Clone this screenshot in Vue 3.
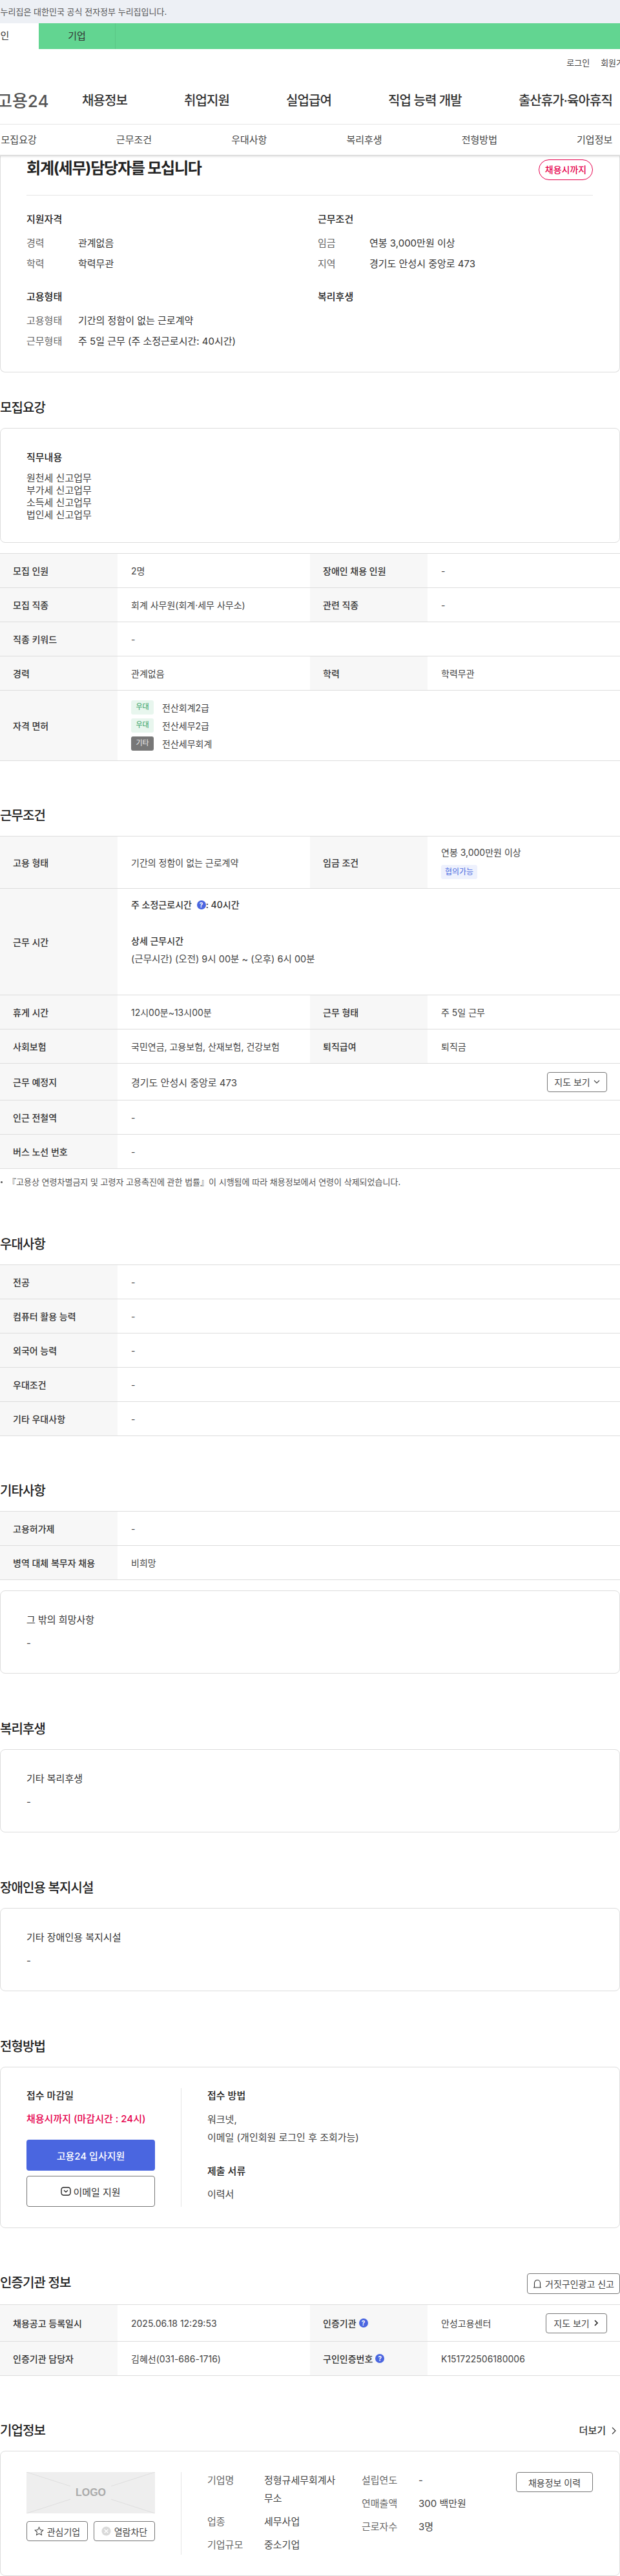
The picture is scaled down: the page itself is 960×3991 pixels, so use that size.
<script setup>
const subnav = ['모집요강', '근무조건', '우대사항', '복리후생', '전형방법', '기업정보']
const mainnav = ['채용정보', '취업지원', '실업급여', '직업 능력 개발', '출산휴가·육아휴직']
const recruit = [
  ['모집 인원', '2명', '장애인 채용 인원', '-'],
  ['모집 직종', '회계 사무원(회계·세무 사무소)', '관련 직종', '-'],
  ['직종 키워드', '-'],
  ['경력', '관계없음', '학력', '학력무관'],
]
const licences = [
  ['우대', '전산회계2급', 'green'],
  ['우대', '전산세무2급', 'green'],
  ['기타', '전산세무회계', 'gray'],
]
const prefer = [['전공', '-'], ['컴퓨터 활용 능력', '-'], ['외국어 능력', '-'], ['우대조건', '-'], ['기타 우대사항', '-']]
const etc = [['고용허가제', '-'], ['병역 대체 복무자 채용', '비희망']]
const condTail = [['인근 전철역', '-'], ['버스 노선 번호', '-']]
</script>

<template>
  <div class="page">
    <div class="gov">이 누리집은 대한민국 공식 전자정부 누리집입니다.</div>
    <div class="tabs">
      <div class="tab on">개인</div>
      <div class="tab">기업</div>
    </div>
    <div class="util"><span>로그인</span><span>회원가입</span></div>
    <header class="gnb">
      <div class="logo">고용24</div>
      <a v-for="m in mainnav" :key="m">{{ m }}</a>
    </header>
    <nav class="snb">
      <a v-for="s in subnav" :key="s">{{ s }}</a>
    </nav>

    <section class="card summary">
      <div class="sum-head">
        <h2>회계(세무)담당자를 모십니다</h2>
        <span class="pill">채용시까지</span>
      </div>
      <div class="sum-grid">
        <div class="block">
          <h4>지원자격</h4>
          <dl><dt>경력</dt><dd>관계없음</dd></dl>
          <dl><dt>학력</dt><dd>학력무관</dd></dl>
        </div>
        <div class="block">
          <h4>근무조건</h4>
          <dl><dt>임금</dt><dd>연봉 3,000만원 이상</dd></dl>
          <dl><dt>지역</dt><dd>경기도 안성시 중앙로 473</dd></dl>
        </div>
        <div class="block">
          <h4>고용형태</h4>
          <dl><dt>고용형태</dt><dd>기간의 정함이 없는 근로계약</dd></dl>
          <dl><dt>근무형태</dt><dd>주 5일 근무 (주 소정근로시간: 40시간)</dd></dl>
        </div>
        <div class="block">
          <h4>복리후생</h4>
        </div>
      </div>
    </section>

    <section class="sec first">
      <h3>모집요강</h3>
      <div class="card box job">
        <h4>직무내용</h4>
        <p>원천세 신고업무<br />부가세 신고업무<br />소득세 신고업무<br />법인세 신고업무</p>
      </div>
      <div class="table after-card">
        <div v-for="r in recruit" :key="r[0]" class="row">
          <div class="th">{{ r[0] }}</div>
          <div class="td" :class="{ wide: r.length === 2 }">{{ r[1] }}</div>
          <template v-if="r.length > 2">
            <div class="th">{{ r[2] }}</div>
            <div class="td">{{ r[3] }}</div>
          </template>
        </div>
        <div class="row lic">
          <div class="th">자격 면허</div>
          <div class="td wide lic-list">
            <div v-for="l in licences" :key="l[1]" class="lic-item">
              <span class="tag" :class="l[2]">{{ l[0] }}</span>{{ l[1] }}
            </div>
          </div>
        </div>
      </div>
    </section>

    <section class="sec">
      <h3>근무조건</h3>
      <div class="table">
        <div class="row r81">
          <div class="th">고용 형태</div>
          <div class="td">기간의 정함이 없는 근로계약</div>
          <div class="th">임금 조건</div>
          <div class="td stack">
            <span>연봉 3,000만원 이상</span>
            <span class="nego">협의가능</span>
          </div>
        </div>
        <div class="row r165">
          <div class="th">근무 시간</div>
          <div class="td wide hours">
            <p class="b">주 소정근로시간 <i class="q">?</i>: 40시간</p>
            <p class="b second">상세 근무시간</p>
            <p class="detail">(근무시간) (오전) 9시 00분 ~ (오후) 6시 00분</p>
          </div>
        </div>
        <div class="row">
          <div class="th">휴게 시간</div>
          <div class="td">12시00분~13시00분</div>
          <div class="th">근무 형태</div>
          <div class="td">주 5일 근무</div>
        </div>
        <div class="row">
          <div class="th">사회보험</div>
          <div class="td">국민연금, 고용보험, 산재보험, 건강보험</div>
          <div class="th">퇴직급여</div>
          <div class="td">퇴직금</div>
        </div>
        <div class="row r57">
          <div class="th">근무 예정지</div>
          <div class="td wide split">
            <span class="addr">경기도 안성시 중앙로 473</span>
            <button class="btn map">지도 보기
              <svg width="10" height="10" viewBox="0 0 10 10"><path d="M1 3l4 4 4-4" fill="none" stroke="#444" stroke-width="1.2" /></svg>
            </button>
          </div>
        </div>
        <div v-for="r in condTail" :key="r[0]" class="row">
          <div class="th">{{ r[0] }}</div>
          <div class="td wide">{{ r[1] }}</div>
        </div>
      </div>
      <p class="note">『고용상 연령차별금지 및 고령자 고용촉진에 관한 법률』이 시행됨에 따라 채용정보에서 연령이 삭제되었습니다.</p>
    </section>

    <section class="sec after-note">
      <h3>우대사항</h3>
      <div class="table">
        <div v-for="r in prefer" :key="r[0]" class="row">
          <div class="th">{{ r[0] }}</div>
          <div class="td wide">{{ r[1] }}</div>
        </div>
      </div>
    </section>

    <section class="sec">
      <h3>기타사항</h3>
      <div class="table">
        <div v-for="r in etc" :key="r[0]" class="row">
          <div class="th">{{ r[0] }}</div>
          <div class="td wide">{{ r[1] }}</div>
        </div>
      </div>
      <div class="card box plain after-card">
        <h5>그 밖의 희망사항</h5>
        <p>-</p>
      </div>
    </section>

    <section class="sec m71">
      <h3>복리후생</h3>
      <div class="card box plain">
        <h5>기타 복리후생</h5>
        <p>-</p>
      </div>
    </section>

    <section class="sec m71">
      <h3>장애인용 복지시설</h3>
      <div class="card box plain">
        <h5>기타 장애인용 복지시설</h5>
        <p>-</p>
      </div>
    </section>

    <section class="sec m71">
      <h3>전형방법</h3>
      <div class="card apply">
        <div class="apply-left">
          <h4>접수 마감일</h4>
          <p class="deadline">채용시까지 (마감시간 : 24시)</p>
          <button class="primary">고용24 입사지원</button>
          <button class="outline">
            <svg width="16" height="16" viewBox="0 0 16 16"><rect x="1" y="2" width="14" height="12" rx="3.5" fill="none" stroke="#222" stroke-width="1.4" /><path d="M5 6.5l3 2.5 3-2.5" fill="none" stroke="#222" stroke-width="1.4" /></svg>
            이메일 지원
          </button>
        </div>
        <div class="apply-right">
          <h4>접수 방법</h4>
          <p class="ways">워크넷,<br />이메일 (개인회원 로그인 후 조회가능)</p>
          <h4 class="docs">제출 서류</h4>
          <p class="doc">이력서</p>
        </div>
      </div>
    </section>

    <section class="sec">
      <div class="head-row">
        <h3>인증기관 정보</h3>
        <button class="btn report">
          <svg width="14" height="16" viewBox="0 0 14 16"><path d="M1 14h12M2.5 14V7a4.5 4.5 0 0 1 9 0v7" fill="none" stroke="#333" stroke-width="1.1" /></svg>
          거짓구인광고 신고
        </button>
      </div>
      <div class="table">
        <div class="row r57">
          <div class="th">채용공고 등록일시</div>
          <div class="td">2025.06.18 12:29:53</div>
          <div class="th">인증기관<i class="q">?</i></div>
          <div class="td split">
            <span>안성고용센터</span>
            <button class="btn map map2">지도 보기
              <svg width="10" height="12" viewBox="0 0 10 12"><path d="M3 2l4 4-4 4" fill="none" stroke="#222" stroke-width="1.6" /></svg>
            </button>
          </div>
        </div>
        <div class="row">
          <div class="th">인증기관 담당자</div>
          <div class="td">김혜선(031-686-1716)</div>
          <div class="th">구인인증번호<i class="q">?</i></div>
          <div class="td">K151722506180006</div>
        </div>
      </div>
    </section>

    <section class="sec">
      <div class="head-row company-head">
        <h3>기업정보</h3>
        <a class="more">더보기
          <svg width="8" height="14" viewBox="0 0 8 14"><path d="M1 2l5 5-5 5" fill="none" stroke="#333" stroke-width="1.2" /></svg>
        </a>
      </div>
      <div class="card company">
        <div class="co-left">
          <div class="co-logo">
            <svg class="co-x" viewBox="0 0 199 64" preserveAspectRatio="none"><path d="M0 0l199 64M199 0L0 64" stroke="#dedede" stroke-width="1" fill="none" /></svg>
            <span>LOGO</span>
          </div>
          <div class="co-btns">
            <button class="btn">
              <svg width="15" height="15" viewBox="0 0 16 16"><path d="M8 1.5l2 4.3 4.7.6-3.4 3.2.9 4.7L8 12l-4.2 2.3.9-4.7L1.3 6.4 6 5.8z" fill="none" stroke="#444" stroke-width="1.1" /></svg>
              관심기업
            </button>
            <button class="btn">
              <svg width="15" height="15" viewBox="0 0 16 16"><circle cx="8" cy="8" r="7.5" fill="#d9d9d9" /><path d="M5 5l6 6M11 5l-6 6" stroke="#fff" stroke-width="1.4" /></svg>
              열람차단
            </button>
          </div>
        </div>
        <div class="co-info">
          <div class="co-col">
            <dl><dt>기업명</dt><dd>정형규세무회계사무소</dd></dl>
            <dl><dt>업종</dt><dd>세무사업</dd></dl>
            <dl><dt>기업규모</dt><dd>중소기업</dd></dl>
          </div>
          <div class="co-col">
            <dl><dt>설립연도</dt><dd>-</dd></dl>
            <dl><dt>연매출액</dt><dd>300 백만원</dd></dl>
            <dl><dt>근로자수</dt><dd>3명</dd></dl>
          </div>
          <button class="btn history">채용정보 이력</button>
        </div>
      </div>
    </section>
  </div>
</template>

<style>
html, body { margin: 0; background: #fff; }
</style>

<style scoped>
.page {
  width: 960px;
  height: 3991px;
  overflow: hidden;
  background: #fff;
  color: #333;
  font-family: Inter, "Noto Sans CJK KR", "Noto Sans", sans-serif;
  font-size: 14px;
}
h2, h3, h4, h5, p, dl, dd { margin: 0; padding: 0; }
button { font-family: inherit; cursor: pointer; background: #fff; }
i { font-style: normal; }

.gov {
  height: 36px;
  line-height: 36px;
  background: #edf0f5;
  font-size: 13px;
  color: #555;
  text-indent: -15px;
}
.tabs { display: flex; height: 40px; margin-left: -59px; background: #62d591; }
.tab {
  width: 119px;
  box-sizing: border-box;
  line-height: 40px;
  text-align: center;
  font-size: 15px;
  color: #333;
  border-right: 1px solid #5ac685;
}
.tab.on { background: #fff; border-right: 0; }
.util {
  height: 40px;
  display: flex;
  justify-content: flex-end;
  align-items: center;
  gap: 17px;
  margin-right: -18px;
  font-size: 13px;
  color: #444;
}
.gnb {
  height: 76px;
  display: flex;
  align-items: center;
  gap: 88px;
  border-bottom: 1px solid #e5e5e5;
  font-size: 20px;
  font-weight: 500;
  color: #333;
  letter-spacing: -0.9px;
  white-space: nowrap;
}
.logo {
  width: 79px;
  margin-left: -5px;
  margin-right: -35px;
  font-size: 26px;
  font-weight: 500;
  color: #555;
  letter-spacing: 0;
  flex: none;
}
.snb {
  height: 48px;
  display: grid;
  grid-template-columns: repeat(6, 178.3px);
  margin-left: -60px;
  line-height: 48px;
  text-align: center;
  font-size: 15px;
  color: #444;
  position: relative;
  z-index: 2;
}
.snb::after {
  content: "";
  position: absolute;
  left: 0;
  right: -200px;
  bottom: -1px;
  height: 2px;
  background: #ddd;
  box-shadow: 0 1px 3px rgba(0, 0, 0, .12);
}

.card {
  border: 1px solid #ddd;
  border-radius: 8px;
  box-sizing: border-box;
  background: #fff;
}
.summary {
  border-top: 0;
  border-radius: 0 0 8px 8px;
  height: 336px;
  padding: 0 41px 0 40px;
}
.sum-head {
  height: 62px;
  box-sizing: border-box;
  padding-top: 6px;
  display: flex;
  justify-content: space-between;
  align-items: flex-start;
  border-bottom: 1px solid #e5e5e5;
}
.sum-head h2 { font-size: 24px; line-height: 28px; font-weight: 700; color: #222; letter-spacing: -1.2px; }
.pill {
  width: 84px;
  height: 32px;
  box-sizing: border-box;
  border: 1px solid #e6004d;
  border-radius: 16px;
  color: #e6004d;
  font-size: 14px;
  font-weight: 500;
  line-height: 29px;
  text-align: center;
}
.sum-grid {
  display: grid;
  grid-template-columns: 451px 1fr;
  grid-auto-rows: 120px;
  padding-top: 25px;
}
.block h4 { margin-bottom: 9px; }
h4 { font-size: 15px; line-height: 24px; font-weight: 500; color: #222; }
h5 { font-size: 15px; line-height: 24px; font-weight: 400; color: #333; }
.block dl { display: flex; height: 32px; line-height: 32px; font-size: 15px; }
.block dt { width: 80px; color: #666; flex: none; }
.block dd { color: #333; white-space: nowrap; }

.sec { margin-top: 70px; }
.sec.first { margin-top: 40px; }
.sec.after-note { margin-top: 72px; }
.sec.m71 { margin-top: 71px; }
h3 {
  font-size: 20px;
  line-height: 30px;
  font-weight: 500;
  color: #222;
  margin-bottom: 16px;
  letter-spacing: -0.9px;
}
.box { padding: 33px 40px 0; }
.job { height: 178px; }
.job p { margin-top: 10px; font-size: 15px; line-height: 19px; color: #444; }
.plain { height: 129px; }
.plain p { margin-top: 12px; font-size: 15px; line-height: 24px; color: #444; }
.after-card { margin-top: 16px; }

.table { border-top: 1px solid #ddd; }
.row {
  display: grid;
  grid-template-columns: 182px 298px 182px 298px;
  height: 53px;
  box-sizing: border-box;
  border-bottom: 1px solid #ddd;
}
.th {
  background: #f7f7f7;
  padding-left: 20px;
  display: flex;
  align-items: center;
  font-weight: 500;
  color: #333;
  white-space: nowrap;
}
.td {
  padding: 0 20px 0 21px;
  display: flex;
  align-items: center;
  color: #444;
  white-space: nowrap;
  min-width: 0;
}
.wide { grid-column: span 3; }
.split { justify-content: space-between; }
.addr { font-size: 15px; }
.r81 { height: 81px; }
.r165 { height: 165px; }
.r57 { height: 57px; }
.lic { height: 109px; }
.lic-list { flex-direction: column; align-items: flex-start; justify-content: center; gap: 6px; }
.lic-item { display: flex; align-items: center; font-size: 14px; height: 22px; }
.tag {
  width: 35px;
  height: 22px;
  line-height: 21px;
  text-align: center;
  font-size: 11px;
  border-radius: 3px;
  margin-right: 13px;
}
.tag.green { background: #e8f6ee; color: #2f9e5f; }
.tag.gray { background: #777; color: #eee; }
.stack { flex-direction: column; align-items: flex-start; justify-content: flex-start; padding-top: 13px; gap: 7px; }
.stack span:first-child { line-height: 24px; }
.nego {
  width: 56px;
  height: 22px;
  line-height: 21px;
  text-align: center;
  font-size: 12px;
  background: #eef1fd;
  color: #4a6ae0;
  border-radius: 3px;
}
.hours { display: block; padding-top: 11px; }
.hours p { line-height: 28px; font-size: 14px; }
.hours .b { font-weight: 500; color: #333; }
.hours .second { margin-top: 28px; }
.hours .detail { font-size: 14.5px; }
.q {
  display: inline-block;
  width: 14px;
  height: 14px;
  border-radius: 50%;
  background: #4a66e0;
  color: #fff;
  font-size: 10px;
  font-weight: 700;
  line-height: 14px;
  text-align: center;
  vertical-align: 1px;
  margin-left: 4px;
}
.btn {
  height: 31px;
  box-sizing: border-box;
  border: 1px solid #777;
  border-radius: 4px;
  color: #444;
  font-size: 14px;
  display: inline-flex;
  align-items: center;
  justify-content: center;
  gap: 5px;
  padding: 0;
  white-space: nowrap;
}
.map { width: 93px; flex: none; }
.map2 { width: 95px; }
.note {
  position: relative;
  margin-top: 10px;
  padding-left: 12px;
  font-size: 13px;
  line-height: 20px;
  color: #555;
  white-space: nowrap;
}
.note::before {
  content: "";
  position: absolute;
  left: 1px;
  top: 9px;
  width: 3px;
  height: 3px;
  border-radius: 50%;
  background: #555;
}

.apply { height: 250px; padding: 32px 0 0 40px; display: flex; }
.apply-left { width: 199px; padding-right: 40px; border-right: 1px solid #e5e5e5; height: 184px; }
.deadline { margin-top: 12px; line-height: 24px; font-size: 15px; font-weight: 500; color: #e6004d; white-space: nowrap; margin-bottom: 20px; }
.primary, .outline {
  display: flex;
  align-items: center;
  justify-content: center;
  gap: 3px;
  width: 199px;
  height: 48px;
  border-radius: 4px;
  font-size: 15px;
  box-sizing: border-box;
}
.primary { background: #4a66e0; border: 0; color: #fff; font-weight: 500; }
.outline { border: 1px solid #777; color: #333; margin-top: 8px; }
.apply-right { padding-left: 40px; font-size: 15px; color: #444; }
.ways { margin-top: 11px; line-height: 28px; }
.docs { margin-top: 26px; }
.doc { margin-top: 12px; line-height: 24px; }

.head-row { display: flex; justify-content: space-between; align-items: flex-start; height: 48px; }
.report { width: 144px; height: 32px; }
.company-head { height: 46px; }
.more { display: flex; align-items: center; gap: 9px; font-size: 15px; font-weight: 500; color: #333; line-height: 30px; padding-right: 5px; }
.company { height: 194px; padding: 32px 41px 0 40px; display: flex; }
.co-left { width: 199px; flex: none; padding-right: 40px; border-right: 1px solid #e5e5e5; height: 128px; }
.co-logo {
  position: relative;
  height: 64px;
  background: #eee;
  display: flex;
  align-items: center;
  justify-content: center;
}
.co-x { position: absolute; inset: 0; width: 100%; height: 100%; }
.co-logo span {
  position: relative;
  background: #eee;
  padding: 0 8px;
  font-family: "Liberation Sans", sans-serif;
  font-size: 16px;
  font-weight: 700;
  color: #aaa;
  line-height: 24px;
}
.co-btns { display: flex; gap: 9px; margin-top: 12px; }
.co-btns .btn { flex: 1; }
.co-info { display: flex; padding-left: 40px; flex: 1; font-size: 15px; min-width: 0; }
.co-col { display: flex; flex-direction: column; gap: 8px; margin-top: -1px; width: 239px; flex: none; }
.co-col dl { display: flex; line-height: 28px; }
.co-col dt { width: 88px; flex: none; color: #666; }
.co-col dd { color: #444; width: 116px; }
.history { width: 119px; flex: none; }
</style>
